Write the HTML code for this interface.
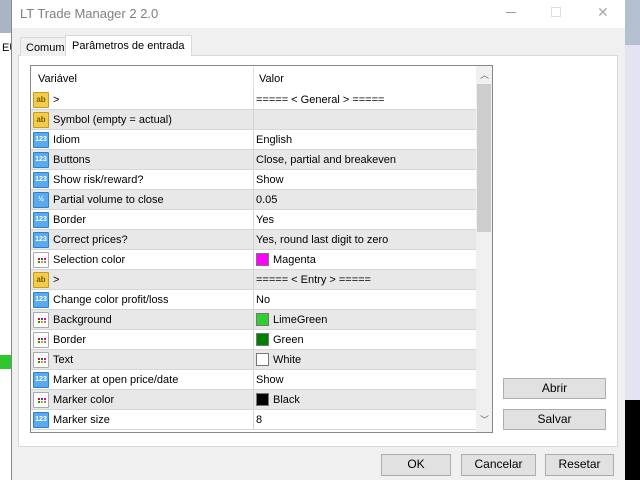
<!DOCTYPE html>
<html><head><meta charset="utf-8"><style>
*{margin:0;padding:0;box-sizing:border-box}
body{width:640px;height:480px;position:relative;overflow:hidden;background:#fff;font-family:"Liberation Sans",sans-serif;font-size:11px;color:#000}
.a{position:absolute}
.row{position:absolute;left:31px;width:445px;height:20px;border-bottom:1px solid #d6d6d6}
.row.g{background:#e8e8e8}
.row .n{position:absolute;left:22px;top:4px}
.row .v{position:absolute;left:225px;top:4px}
.row .d{position:absolute;left:222px;top:0;width:1px;height:20px;background:#d6d6d6}
.ic{position:absolute;left:2px;top:2px;width:16px;height:16px;font-size:8px;font-weight:bold;text-align:center;line-height:14px;border-radius:1px}
.ab{background:#f3cd4a;border:1px solid #c99a1a;color:#7a5a00}
.n1{background:#5aaaf0;border:1px solid #2b7fd0;color:#fff;font-size:7px}
.cl{background:#fff;border:1px solid #aaa}
.cl i{position:absolute;width:2px;height:2px}
.sw{position:absolute;left:225px;top:3px;width:13px;height:13px;border:1px solid #777}
.row .sv{left:242px}
.btn{position:absolute;background:#e1e1e1;border:1px solid #adadad;text-align:center;font-size:12px;line-height:19px}
</style></head><body>
<div class="a" style="left:0;top:0;width:11px;height:33px;background:#aab4c4"></div>
<div class="a" style="left:2px;top:42px;font-size:11px">EU</div>
<div class="a" style="left:0;top:355px;width:11px;height:14px;background:#2cc82c"></div>
<div class="a" style="left:625px;top:0;width:15px;height:45px;background:#b4c0d0"></div>
<div class="a" style="left:625px;top:45px;width:15px;height:355px;background:#e2e4f4"></div>
<div class="a" style="left:625px;top:400px;width:15px;height:80px;background:#000"></div>
<div class="a" style="left:11px;top:0;width:614px;height:480px;background:#f0f0f0;border-left:1px solid #888"></div>
<div class="a" style="left:12px;top:0;width:613px;height:28px;background:#fff"></div>
<div class="a" style="left:20px;top:6px;font-size:13px;color:#808080">LT Trade Manager 2 2.0</div>
<div class="a" style="left:506px;top:12px;width:10px;height:1px;background:#999"></div>
<div class="a" style="left:551px;top:7px;width:10px;height:10px;border:1px solid #ddd"></div>
<div class="a" style="left:597px;top:4px;font-size:14px;color:#aaa">✕</div>
<div class="a" style="left:18px;top:55px;width:600px;height:392px;background:#fff;border:1px solid #d9d9d9"></div>
<div class="a" style="left:20px;top:37px;width:46px;height:19px;border:1px solid #d9d9d9;border-bottom:none;background:#f0f0f0;font-size:11px;padding:4px 0 0 5px">Comum</div>
<div class="a" style="left:65px;top:35px;width:127px;height:21px;border:1px solid #d9d9d9;border-bottom:none;background:#fff;font-size:11px;padding:4px 0 0 6px">Parâmetros de entrada</div>
<div class="a" style="left:30px;top:65px;width:463px;height:368px;border:1px solid #828790;background:#fff"></div>
<div class="a" style="left:38px;top:73px">Variável</div>
<div class="a" style="left:259px;top:73px">Valor</div>
<div class="a" style="left:253px;top:67px;width:1px;height:23px;background:#e0e0e0"></div>
<div class="a" style="left:476px;top:66px;width:16px;height:366px;background:#f0f0f0"></div>
<div class="a" style="left:477px;top:84px;width:14px;height:148px;background:#cdcdcd"></div>
<div class="a" style="left:480px;top:68px;font-size:9px;color:#666">︿</div>
<div class="a" style="left:480px;top:413px;font-size:9px;color:#666">﹀</div>
<div id="rows"></div>
<script>
var R=[["ab",">","===== < General > ====="],["ab","Symbol (empty = actual)",""],["n","Idiom","English"],["n","Buttons","Close, partial and breakeven"],["n","Show risk/reward?","Show"],["h","Partial volume to close","0.05"],["n","Border","Yes"],["n","Correct prices?","Yes, round last digit to zero"],["c","Selection color","Magenta","#ff00ff"],["ab",">","===== < Entry > ====="],["n","Change color profit/loss","No"],["c","Background","LimeGreen","#32cd32"],["c","Border","Green","#008000"],["c","Text","White","#ffffff"],["n","Marker at open price/date","Show"],["c","Marker color","Black","#000000"],["n","Marker size","8"]];
var h="";R.forEach(function(r,i){var ic;
if(r[0]=="ab")ic='<div class="ic ab">ab</div>';else if(r[0]=="n")ic='<div class="ic n1">123</div>';else if(r[0]=="h")ic='<div class="ic n1">½</div>';else ic='<div class="ic cl"><i style="left:4px;top:5px;background:red"></i><i style="left:7px;top:5px;background:#06c"></i><i style="left:10px;top:5px;background:#c0c"></i><i style="left:4px;top:8px;background:#0a0"></i><i style="left:7px;top:8px;background:#f80"></i><i style="left:10px;top:8px;background:#888"></i></div>';
var v=r[0]=="c"?'<div class="sw" style="background:'+r[3]+'"></div><span class="v sv">'+r[2]+'</span>':'<span class="v">'+r[2]+'</span>';
h+='<div class="row'+(i%2?' g':'')+'" style="top:'+(90+i*20)+'px">'+ic+'<span class="n">'+r[1]+'</span><div class="d"></div>'+v+'</div>';});
document.getElementById("rows").innerHTML=h;
</script>
<div class="btn" style="left:503px;top:378px;width:103px;height:21px">Abrir</div>
<div class="btn" style="left:503px;top:409px;width:103px;height:21px">Salvar</div>
<div class="btn" style="left:381px;top:454px;width:70px;height:22px">OK</div>
<div class="btn" style="left:461px;top:454px;width:75px;height:22px">Cancelar</div>
<div class="btn" style="left:545px;top:454px;width:69px;height:22px">Resetar</div>
</body></html>
